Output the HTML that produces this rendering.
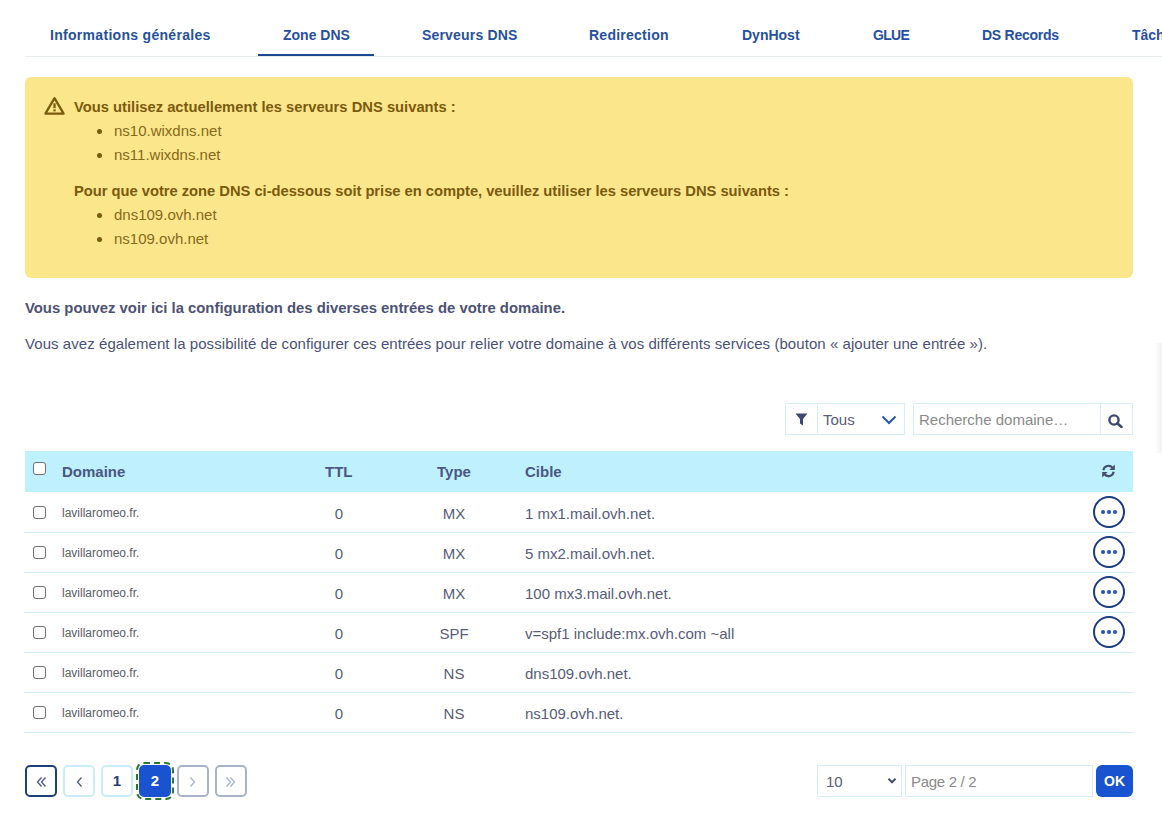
<!DOCTYPE html>
<html><head><meta charset="utf-8">
<style>
*{box-sizing:border-box;margin:0;padding:0}
html,body{width:1162px;height:827px;overflow:hidden;background:#fff}
body{position:relative;font-family:"Liberation Sans",sans-serif;color:#4d5693}
.a{position:absolute;white-space:nowrap;line-height:1}
.tab{font-weight:bold;font-size:14px;color:#26509e}
.tabline{position:absolute;left:25px;top:56px;width:1137px;height:1px;background:#e8eef0}
.tabul{position:absolute;left:258px;top:54px;width:116px;height:2px;background:#1b4690}
.warn{position:absolute;left:25px;top:77px;width:1108px;height:201px;background:#fce68c;border-radius:6px}
.wt{color:#86691a;font-size:15px}
.wb{color:#7a5a0c}
.wb{font-weight:bold;font-size:14.75px}
.dot{position:absolute;width:5px;height:5px;border-radius:50%;background:#7a5a0c}
.p{font-size:15px;color:#4c5276}
.hdr{position:absolute;left:25px;top:451px;width:1108px;height:41px;background:#bef0fd}
.th{font-weight:bold;font-size:15px;color:#4a5784}
.row{position:absolute;left:24px;width:1109px;height:1px;background:#d0ecf2}
.cb{position:absolute;width:13px;height:13px;border:1px solid #6e6e6e;border-radius:3px;background:#fff}
.dom{font-size:12px;color:#5c5c66}
.td{font-size:15px;color:#575c78}
.act{position:absolute;left:1093px;width:32px;height:32px;border:2px solid #1c3a80;border-radius:50%}
.act i{position:absolute;top:12.2px;width:3.8px;height:3.8px;border-radius:50%;background:#2556b6}
.box{position:absolute;border:1px solid #d6eef6;background:#fff}
.pg{position:absolute;top:765px;width:32px;height:32px;border:2px solid #c9eef8;border-radius:5px;background:#fff}
</style></head><body>

<!-- Tabs -->
<div class="a tab" style="left:50px;top:28px;letter-spacing:0.3px">Informations générales</div>
<div class="a tab" style="left:283px;top:28px">Zone DNS</div>
<div class="a tab" style="left:422px;top:28px;letter-spacing:0.18px">Serveurs DNS</div>
<div class="a tab" style="left:589px;top:28px;letter-spacing:0.25px">Redirection</div>
<div class="a tab" style="left:742px;top:28px">DynHost</div>
<div class="a tab" style="left:873px;top:28px;letter-spacing:-0.7px">GLUE</div>
<div class="a tab" style="left:982px;top:28px;letter-spacing:-0.25px">DS Records</div>
<div class="a tab" style="left:1132px;top:28px">Tâches</div>
<div class="tabline"></div>
<div class="tabul"></div>

<!-- Warning -->
<div class="warn"></div>
<svg class="a" style="left:43px;top:96px" width="23" height="20" viewBox="0 0 23 20">
  <path d="M11.5 2.2 L20.6 17.6 H2.4 Z" fill="none" stroke="#7a5a0c" stroke-width="2.3" stroke-linejoin="round"/>
  <rect x="10.35" y="7.3" width="2.3" height="4.9" fill="#7a5a0c"/>
  <rect x="10.35" y="13.4" width="2.3" height="2" fill="#7a5a0c"/>
</svg>
<div class="a wt wb" style="left:74px;top:100px">Vous utilisez actuellement les serveurs DNS suivants :</div>
<div class="dot" style="left:97px;top:129px"></div>
<div class="a wt" style="left:114px;top:123px">ns10.wixdns.net</div>
<div class="dot" style="left:97px;top:153px"></div>
<div class="a wt" style="left:114px;top:147px">ns11.wixdns.net</div>
<div class="a wt wb" style="left:74px;top:184px;letter-spacing:-0.03px">Pour que votre zone DNS ci-dessous soit prise en compte, veuillez utiliser les serveurs DNS suivants :</div>
<div class="dot" style="left:97px;top:213px"></div>
<div class="a wt" style="left:114px;top:207px">dns109.ovh.net</div>
<div class="dot" style="left:97px;top:237px"></div>
<div class="a wt" style="left:114px;top:231px">ns109.ovh.net</div>

<!-- Paragraphs -->
<div class="a p" style="left:25px;top:301px;font-weight:bold;font-size:14.85px">Vous pouvez voir ici la configuration des diverses entrées de votre domaine.</div>
<div class="a p" style="left:25px;top:336px;letter-spacing:0.06px">Vous avez également la possibilité de configurer ces entrées pour relier votre domaine à vos différents services (bouton « ajouter une entrée »).</div>


<!-- Filter -->
<div class="box" style="left:785px;top:403px;width:120px;height:32px"></div>
<div class="a" style="left:817px;top:404px;width:1px;height:30px;background:#d6eef6"></div>
<svg class="a" style="left:795px;top:413px" width="13" height="13" viewBox="0 0 13 13"><path d="M0.5 0.5 H12.5 L8 6 V12.5 L5 10.5 V6 Z" fill="#3e4870"/></svg>
<div class="a td" style="left:823px;top:412px">Tous</div>
<svg class="a" style="left:881px;top:415px" width="16" height="10" viewBox="0 0 16 10"><path d="M1.5 1.5 L8 8 L14.5 1.5" fill="none" stroke="#2556b6" stroke-width="2"/></svg>
<div class="box" style="left:913px;top:403px;width:220px;height:32px"></div>
<div class="a" style="left:1100px;top:404px;width:1px;height:30px;background:#d6eef6"></div>
<div class="a td" style="left:919px;top:412px;color:#8a8a8a">Recherche domaine…</div>
<svg class="a" style="left:1108px;top:413.5px" width="16" height="14" viewBox="0 0 16 14"><circle cx="6" cy="6" r="4.6" fill="none" stroke="#3e4870" stroke-width="2.4"/><path d="M9.3 9.3 L13.5 13" stroke="#3e4870" stroke-width="2.6" stroke-linecap="round"/></svg>

<!-- Table -->
<div class="hdr"></div>
<div class="cb" style="left:33px;top:462px"></div>
<div class="a th" style="left:62px;top:464px">Domaine</div>
<div class="a th" style="left:325px;top:464px">TTL</div>
<div class="a th" style="left:437px;top:464px">Type</div>
<div class="a th" style="left:525px;top:464px">Cible</div>
<svg class="a" style="left:1101px;top:464px" width="15" height="14" viewBox="0 0 15 14"><path d="M2.3 6.3 A5.3 5.3 0 0 1 11.5 3.7" fill="none" stroke="#454e70" stroke-width="2.1"/><path d="M13.8 0.6 V6 H8.4 Z" fill="#454e70"/><path d="M12.7 7.7 A5.3 5.3 0 0 1 3.5 10.3" fill="none" stroke="#454e70" stroke-width="2.1"/><path d="M1.2 13.4 V8 H6.6 Z" fill="#454e70"/></svg>

<div class="cb" style="left:33px;top:506px"></div>
<div class="a dom" style="left:62px;top:507px">lavillaromeo.fr.</div>
<div class="a td" style="left:304px;width:70px;text-align:center;top:506px">0</div>
<div class="a td" style="left:404px;width:100px;text-align:center;top:506px">MX</div>
<div class="a td" style="left:525px;top:506px">1 mx1.mail.ovh.net.</div>
<div class="act" style="top:496px"><i style="left:5.8px"></i><i style="left:12px"></i><i style="left:18.4px"></i></div>
<div class="row" style="top:532px"></div>
<div class="cb" style="left:33px;top:546px"></div>
<div class="a dom" style="left:62px;top:547px">lavillaromeo.fr.</div>
<div class="a td" style="left:304px;width:70px;text-align:center;top:546px">0</div>
<div class="a td" style="left:404px;width:100px;text-align:center;top:546px">MX</div>
<div class="a td" style="left:525px;top:546px">5 mx2.mail.ovh.net.</div>
<div class="act" style="top:536px"><i style="left:5.8px"></i><i style="left:12px"></i><i style="left:18.4px"></i></div>
<div class="row" style="top:572px"></div>
<div class="cb" style="left:33px;top:586px"></div>
<div class="a dom" style="left:62px;top:587px">lavillaromeo.fr.</div>
<div class="a td" style="left:304px;width:70px;text-align:center;top:586px">0</div>
<div class="a td" style="left:404px;width:100px;text-align:center;top:586px">MX</div>
<div class="a td" style="left:525px;top:586px">100 mx3.mail.ovh.net.</div>
<div class="act" style="top:576px"><i style="left:5.8px"></i><i style="left:12px"></i><i style="left:18.4px"></i></div>
<div class="row" style="top:612px"></div>
<div class="cb" style="left:33px;top:626px"></div>
<div class="a dom" style="left:62px;top:627px">lavillaromeo.fr.</div>
<div class="a td" style="left:304px;width:70px;text-align:center;top:626px">0</div>
<div class="a td" style="left:404px;width:100px;text-align:center;top:626px">SPF</div>
<div class="a td" style="left:525px;top:626px">v=spf1 include:mx.ovh.com ~all</div>
<div class="act" style="top:616px"><i style="left:5.8px"></i><i style="left:12px"></i><i style="left:18.4px"></i></div>
<div class="row" style="top:652px"></div>
<div class="cb" style="left:33px;top:666px"></div>
<div class="a dom" style="left:62px;top:667px">lavillaromeo.fr.</div>
<div class="a td" style="left:304px;width:70px;text-align:center;top:666px">0</div>
<div class="a td" style="left:404px;width:100px;text-align:center;top:666px">NS</div>
<div class="a td" style="left:525px;top:666px">dns109.ovh.net.</div>
<div class="row" style="top:692px"></div>
<div class="cb" style="left:33px;top:706px"></div>
<div class="a dom" style="left:62px;top:707px">lavillaromeo.fr.</div>
<div class="a td" style="left:304px;width:70px;text-align:center;top:706px">0</div>
<div class="a td" style="left:404px;width:100px;text-align:center;top:706px">NS</div>
<div class="a td" style="left:525px;top:706px">ns109.ovh.net.</div>
<div class="row" style="top:732px"></div>

<!-- Pagination -->
<div class="pg" style="left:25px;border-color:#1f3f7a"></div>
<div class="pg" style="left:63px"></div>
<div class="pg" style="left:101px"></div>
<div class="a" style="left:136px;top:762px;width:38px;height:38px;border:2px dashed #2b7a2b;border-radius:8px"></div>
<div class="pg" style="left:139px;background:#1a53cf;border-color:#1a53cf"></div>
<div class="pg" style="left:177px;border-color:#a7b3c9"></div>
<div class="pg" style="left:215px;border-color:#a7b3c9"></div>
<svg class="a" style="left:36px;top:776px" width="11" height="12" viewBox="0 0 11 12"><path d="M5.5 1.5 L1.5 6 L5.5 10.5 M9.5 1.5 L5.5 6 L9.5 10.5" fill="none" stroke="#4d5693" stroke-width="1.3"/></svg>
<svg class="a" style="left:76px;top:776px" width="7" height="12" viewBox="0 0 7 12"><path d="M5.5 1.5 L1.5 6 L5.5 10.5" fill="none" stroke="#4d5693" stroke-width="1.3"/></svg>
<div class="a" style="left:101px;top:765px;width:32px;height:32px;text-align:center;line-height:32px;font-size:15px;font-weight:bold;color:#1f3f7a">1</div>
<div class="a" style="left:139px;top:765px;width:32px;height:32px;text-align:center;line-height:32px;font-size:15px;font-weight:bold;color:#fff">2</div>
<svg class="a" style="left:189px;top:776px" width="7" height="12" viewBox="0 0 7 12"><path d="M1.5 1.5 L5.5 6 L1.5 10.5" fill="none" stroke="#a7b3c9" stroke-width="1.3"/></svg>
<svg class="a" style="left:225px;top:776px" width="11" height="12" viewBox="0 0 11 12"><path d="M1.5 1.5 L5.5 6 L1.5 10.5 M5.5 1.5 L9.5 6 L5.5 10.5" fill="none" stroke="#a7b3c9" stroke-width="1.3"/></svg>

<div class="box" style="left:817px;top:765px;width:85px;height:32px"></div>
<div class="a td" style="left:826px;top:774px">10</div>
<svg class="a" style="left:887px;top:777px" width="10" height="8" viewBox="0 0 10 8"><path d="M1.5 1.8 L5 5.3 L8.5 1.8" fill="none" stroke="#454e70" stroke-width="2"/></svg>
<div class="box" style="left:905px;top:765px;width:188px;height:32px"></div>
<div class="a td" style="left:911px;top:774px;color:#8a8a8a;letter-spacing:-0.3px">Page 2 / 2</div>
<div class="a" style="left:1096px;top:765px;width:37px;height:32px;background:#1a53cf;border-radius:6px;color:#fff;font-weight:bold;font-size:14px;text-align:center;line-height:32px">OK</div>

<div class="a" style="left:1155px;top:343px;width:7px;height:110px;background:linear-gradient(to right,rgba(240,240,247,0),rgba(240,240,247,1))"></div>
</body></html>
